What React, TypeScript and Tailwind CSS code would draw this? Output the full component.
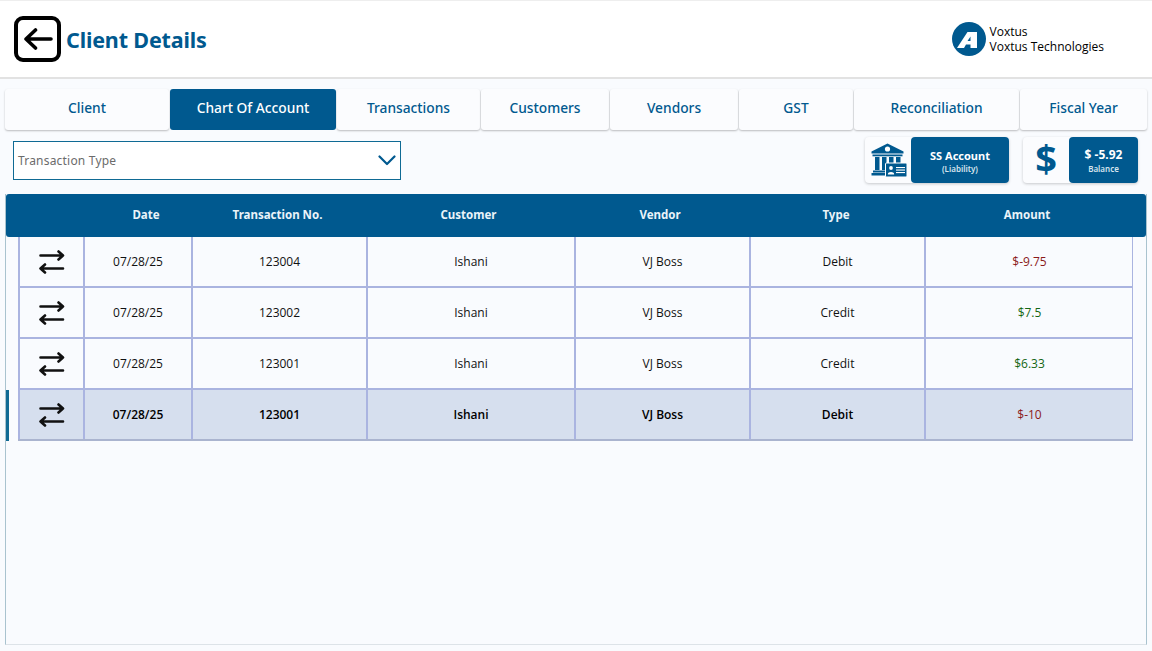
const tabs = [
  { label: "Client", w: "w-[164px]" },
  { label: "Chart Of Account", w: "w-[166px]", active: true },
  { label: "Transactions", w: "w-[143px]" },
  { label: "Customers", w: "w-[128px]" },
  { label: "Vendors", w: "w-[128px]" },
  { label: "GST", w: "w-[114px]" },
  { label: "Reconciliation", w: "w-[165px]" },
  { label: "Fiscal Year", w: "w-[127px]" },
];

const rows = [
  { no: "123004", type: "Debit", amount: "$-9.75", color: "text-[#8b1a1a]" },
  { no: "123002", type: "Credit", amount: "$7.5", color: "text-[#146614]" },
  { no: "123001", type: "Credit", amount: "$6.33", color: "text-[#146614]" },
  { no: "123001", type: "Debit", amount: "$-10", color: "text-[#8b1a1a]", selected: true },
];

function Swap() {
  return (
    <svg width="26" height="24" viewBox="0 0 26 24" fill="none" stroke="#111" strokeWidth="2.600" strokeLinecap="round" strokeLinejoin="round">
      <path d="M1.500 5.500H24M19.500 1.500L24 5.500L19.500 9.500" />
      <path d="M24 18.500H1.500M6 14.500L1.500 18.500L6 22.500" />
    </svg>
  );
}

function Bank() {
  return (
    <svg width="36" height="34" viewBox="0 0 36 34" fill="#00598f">
      <path d="M16.500 0.500L0.500 8.500V10.500H32.500V8.500Z" />
      <circle cx="16.500" cy="6" r="2.600" fill="#fff" />
      <rect x="1.500" y="11.500" width="30" height="1.800" />
      <rect x="4" y="14" width="4.500" height="13" />
      <rect x="11" y="14" width="4.500" height="13" />
      <rect x="18" y="14" width="4.500" height="7" />
      <rect x="25" y="14" width="4.500" height="7" />
      <rect x="2" y="27.500" width="13.500" height="2" />
      <rect x="0.500" y="30" width="15" height="2.500" />
      <rect x="14.500" y="20" width="21.500" height="14" rx="1" stroke="#fff" strokeWidth="1" />
      <circle cx="20" cy="25" r="1.900" fill="#fff" />
      <path d="M16.800 31.500C16.800 28.300 23.200 28.300 23.200 31.500Z" fill="#fff" />
      <rect x="25" y="24" width="9" height="1.100" fill="#fff" />
      <rect x="25" y="26.500" width="9" height="1.100" fill="#fff" />
      <rect x="25" y="29" width="9" height="1.100" fill="#fff" />
    </svg>
  );
}

export default function App() {
  return (
    <div className="w-[1152px] h-[651px] overflow-hidden bg-[#f9fbfe] font-['Noto_Sans','Open_Sans',sans-serif]">
      <header className="h-[79px] bg-white border-t border-t-[#eeeeee] border-b-2 border-b-[#e2e2e2] flex items-center pl-[14px] pb-[1px]">
        <div className="w-[47px] h-[46px] rounded-[9px] border-[4px] border-black flex items-center justify-center">
          <svg width="30" height="22" viewBox="0 0 30 22" fill="none" stroke="#000" strokeWidth="3.600" strokeLinecap="round" strokeLinejoin="round">
            <path d="M28 11H3M12.500 2L3 11L12.500 20" />
          </svg>
        </div>
        <h1 className="ml-[5px] mt-[3px] text-[21.500px] tracking-[-0.15px] leading-none font-bold text-[#00598f]">Client Details</h1>
        <div className="ml-auto mr-[48px] flex items-center gap-[4px]">
          <svg width="34" height="34" viewBox="0 0 34 34">
            <circle cx="17" cy="17" r="17" fill="#00598f" />
            <path fillRule="evenodd" d="M5 26L15.500 10H25V26H18.500V22.500H14L12 26ZM18.500 14.500L15.500 19H18.500Z" fill="#fff" />
          </svg>
          <div className="text-[12px] leading-[15px] text-black font-['Open_Sans',sans-serif]">
            <div>Voxtus</div>
            <div>Voxtus Technologies</div>
          </div>
        </div>
      </header>

      <nav className="flex mt-[10px] ml-[5px] h-[41px]">
        {tabs.map((t) => (
          <div
            key={t.label}
            className={`${t.w} shrink-0 rounded-[3px] flex items-center justify-center pb-[2px] text-[13.750px] font-medium mr-[1px] ${
              t.active ? "bg-[#00598f] text-white" : "bg-[#fbfcfe] text-[#00598f] shadow-[0_1px_2px_rgba(0,0,0,0.25)]"
            }`}
          >
            {t.label}
          </div>
        ))}
      </nav>

      <div className="flex items-center mt-[7px] h-[46px] pl-[13px]">
        <div className="w-[388px] h-[39px] bg-white border border-[#0f6a94] flex items-center justify-between pl-[4px] pr-[4px]">
          <span className="text-[12px] tracking-[0.2px] mt-[2px] text-[#6b6b6b]">Transaction Type</span>
          <svg width="18" height="11" viewBox="0 0 18 11" fill="none" stroke="#00598f" strokeWidth="2.200" strokeLinecap="round" strokeLinejoin="round">
            <path d="M1.500 1.500L9 9L16.500 1.500" />
          </svg>
        </div>
        <div className="ml-[464px] flex h-[46px] w-[144px] rounded-[4px] bg-[#fbfcfe] shadow-[0_1px_3px_rgba(0,0,0,0.2)]">
          <div className="w-[46px] flex items-center justify-center pl-[1px]">
            <Bank />
          </div>
          <div className="w-[98px] rounded-[4px] bg-[#00598f] text-white flex flex-col items-center justify-center pt-[2px]">
            <span className="text-[11px] leading-[15px] font-bold">SS Account</span>
            <span className="text-[8px] leading-[11px] font-semibold text-[#d6e4ee]">(Liability)</span>
          </div>
        </div>
        <div className="ml-[14px] flex h-[46px] w-[115px] rounded-[4px] bg-[#fbfcfe] shadow-[0_1px_3px_rgba(0,0,0,0.2)]">
          <div className="w-[46px] flex items-center justify-center pb-[4px] text-[38px] leading-none font-bold text-[#00598f]">$</div>
          <div className="w-[69px] rounded-[4px] bg-[#00598f] text-white flex flex-col items-center justify-center">
            <span className="text-[12px] leading-[17px] font-bold">$ -5.92</span>
            <span className="text-[8px] leading-[12px] font-semibold text-[#d6e4ee]">Balance</span>
          </div>
        </div>
      </div>

      <main className="mt-[11px] ml-[5px] w-[1142px] h-[451px] border-l border-r border-b border-l-[#a9c3cf] border-r-[#a9c3cf] border-b-[#dde3e8]">
        <div className="grid grid-cols-[86px_108px_155px_227px_156px_196px_186px_27px] h-[43px] pb-[2px] items-center rounded-[3px] bg-[#00598f] text-[11.500px] font-bold text-[#eaf3f9] text-center">
          <div />
          <div>Date</div>
          <div>Transaction No.</div>
          <div>Customer</div>
          <div>Vendor</div>
          <div>Type</div>
          <div>Amount</div>
          <div />
        </div>
        <div className="flex flex-col">
          {rows.map((r, i) => (
            <div key={i} className="relative pl-[12px]">
              {r.selected && <div className="absolute left-0 top-0 bottom-0 w-[3px] bg-[#0f6a94]" />}
              <div
                className={`w-[1115px] h-[51px] grid grid-cols-[65px_108px_175px_208px_175px_175px_209px] border-b-2 border-r border-[#aab4e0] text-[12px] text-center font-['Open_Sans',sans-serif] ${
                  r.selected ? "bg-[#d6dfee] font-semibold text-black border-b border-b-[#aab4cf] h-[50px]" : "text-[#111]"
                }`}
              >
                <div className="border-l-2 border-[#aab4e0] flex items-center justify-center"><Swap /></div>
                <div className="border-l-2 border-[#aab4e0] flex items-center justify-center">07/28/25</div>
                <div className="border-l-2 border-[#aab4e0] flex items-center justify-center">{r.no}</div>
                <div className="border-l-2 border-[#aab4e0] flex items-center justify-center">Ishani</div>
                <div className="border-l-2 border-[#aab4e0] flex items-center justify-center">VJ Boss</div>
                <div className="border-l-2 border-[#aab4e0] flex items-center justify-center">{r.type}</div>
                <div className={`border-l-2 border-[#aab4e0] flex items-center justify-center ${r.color} font-normal`}>{r.amount}</div>
              </div>
            </div>
          ))}
        </div>
      </main>
    </div>
  );
}
